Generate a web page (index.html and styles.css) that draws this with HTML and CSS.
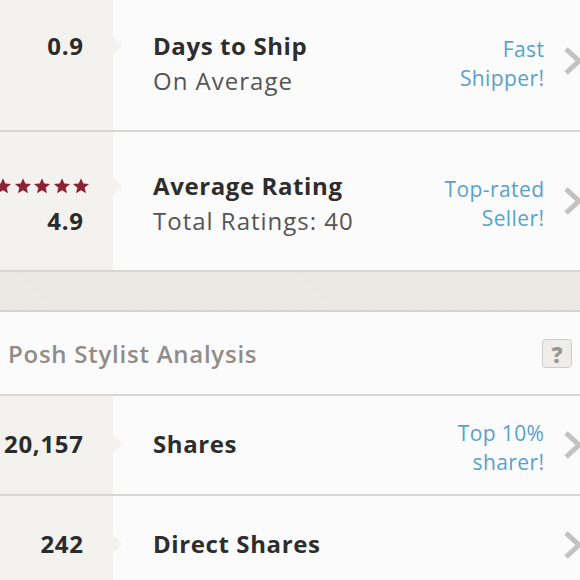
FILE: index.html
```html
<!DOCTYPE html>
<html>
<head>
<meta charset="utf-8">
<link rel="stylesheet" href="styles.css">
</head>
<body>
<div class="page">
  <div class="row tall">
    <div class="left"><div class="num">0.9</div></div>
    <div class="main">
      <div class="title">Days to Ship</div>
      <div class="sub">On Average</div>
    </div>
    <div class="badge">Fast<br>Shipper!</div>
    <div class="chev"><svg width="24" height="32" viewBox="0 0 24 32"><path d="M5 4 L18 16 L5 28" fill="none" stroke="#c3c2c0" stroke-width="5"/></svg></div>
  </div>
  <div class="row tall">
    <div class="left">
      <div class="stars">
        <svg width="18" height="18" viewBox="0 0 24 24"><path d="M12 1.5l3.1 7.1 7.6.6-5.8 5 1.8 7.5L12 17.8l-6.7 3.9 1.8-7.5-5.8-5 7.6-.6z" fill="#8c2335"/></svg>
        <svg width="18" height="18" viewBox="0 0 24 24"><path d="M12 1.5l3.1 7.1 7.6.6-5.8 5 1.8 7.5L12 17.8l-6.7 3.9 1.8-7.5-5.8-5 7.6-.6z" fill="#8c2335"/></svg>
        <svg width="18" height="18" viewBox="0 0 24 24"><path d="M12 1.5l3.1 7.1 7.6.6-5.8 5 1.8 7.5L12 17.8l-6.7 3.9 1.8-7.5-5.8-5 7.6-.6z" fill="#8c2335"/></svg>
        <svg width="18" height="18" viewBox="0 0 24 24"><path d="M12 1.5l3.1 7.1 7.6.6-5.8 5 1.8 7.5L12 17.8l-6.7 3.9 1.8-7.5-5.8-5 7.6-.6z" fill="#8c2335"/></svg>
        <svg width="18" height="18" viewBox="0 0 24 24"><path d="M12 1.5l3.1 7.1 7.6.6-5.8 5 1.8 7.5L12 17.8l-6.7 3.9 1.8-7.5-5.8-5 7.6-.6z" fill="#8c2335"/></svg>
      </div>
      <div class="num">4.9</div>
    </div>
    <div class="main">
      <div class="title">Average Rating</div>
      <div class="sub">Total Ratings: 40</div>
    </div>
    <div class="badge">Top-rated<br>Seller!</div>
    <div class="chev"><svg width="24" height="32" viewBox="0 0 24 32"><path d="M5 4 L18 16 L5 28" fill="none" stroke="#c3c2c0" stroke-width="5"/></svg></div>
  </div>
  <div class="band"></div>
  <div class="header">
    <div class="htitle">Posh Stylist Analysis</div>
    <div class="help">?</div>
  </div>
  <div class="row short">
    <div class="left"><div class="num">20,157</div></div>
    <div class="main">
      <div class="title">Shares</div>
    </div>
    <div class="badge">Top 10%<br>sharer!</div>
    <div class="chev"><svg width="24" height="32" viewBox="0 0 24 32"><path d="M5 4 L18 16 L5 28" fill="none" stroke="#c3c2c0" stroke-width="5"/></svg></div>
  </div>
  <div class="row short">
    <div class="left"><div class="num">242</div></div>
    <div class="main">
      <div class="title">Direct Shares</div>
    </div>
    <div class="badge"></div>
    <div class="chev"><svg width="24" height="32" viewBox="0 0 24 32"><path d="M5 4 L18 16 L5 28" fill="none" stroke="#c3c2c0" stroke-width="5"/></svg></div>
  </div>
</div>
</body>
</html>
```

FILE: styles.css
```css
html, body {
  margin: 0;
  padding: 0;
  background: #fcfbfb;
  overflow: hidden;
}
body {
  width: 580px;
  height: 580px;
  font-family: "Open Sans", Lato, "Liberation Sans", sans-serif;
}
.page {
  margin-top: -8px;
  width: 580px;
}
.row {
  display: flex;
  border-bottom: 2px solid #d8d6d3;
  background: #fcfbfb;
}
.row.tall { height: 138px; }
.row.short { height: 98px; }
.left {
  width: 113px;
  flex: none;
  background: #f4f2ef;
  position: relative;
  box-sizing: border-box;
  padding-right: 30px;
  display: flex;
  flex-direction: column;
  align-items: flex-end;
}
.left::after {
  content: "";
  position: absolute;
  right: -9px;
  width: 0;
  height: 0;
  border-top: 9px solid transparent;
  border-bottom: 9px solid transparent;
  border-left: 9px solid #f4f2ef;
}
.tall .left { padding-top: 36px; }
.tall .left::after { top: 45px; }
.short .left { padding-top: 30px; }
.short .left::after { top: 39px; }
.num {
  font-size: 24px;
  font-weight: 700;
  color: #2b2b2b;
  line-height: 35px;
  letter-spacing: 0.7px;
  margin-right: -0.7px;
}
.stars {
  display: flex;
  gap: 1.5px;
  height: 35px;
  align-items: center;
  margin-right: -7px;
}
.stars svg { display: block; }
.main {
  flex: 1;
  padding-left: 40px;
}
.tall .main { padding-top: 36px; }
.short .main { padding-top: 30px; }
.title {
  font-size: 24px;
  font-weight: 700;
  color: #2d2d2d;
  line-height: 35px;
  letter-spacing: 0.6px;
}
.sub {
  font-size: 24px;
  color: #555555;
  line-height: 35px;
  letter-spacing: 1px;
}
.badge {
  align-self: center;
  margin-top: 6px;
  text-align: right;
  font-size: 21px;
  line-height: 29px;
  color: #56a2cb;
  letter-spacing: 0.4px;
  margin-right: -0.4px;
}
.chev {
  width: 36px;
  flex: none;
  align-self: center;
  display: flex;
  padding-left: 17px;
  box-sizing: border-box;
}
.chev svg { display: block; flex: none; }
.band {
  height: 38px;
  background: #ebe8e4;
  background-image: repeating-linear-gradient(45deg, rgba(255,255,255,0.1) 0 1px, transparent 1px 3px);
  border-bottom: 2px solid #d6d3cf;
}
.header {
  height: 82px;
  display: flex;
  align-items: center;
  justify-content: space-between;
  padding: 0 8px;
  border-bottom: 2px solid #d8d6d3;
  background: #fcfbfb;
}
.htitle {
  font-size: 24px;
  font-weight: 600;
  color: #8f8c89;
  letter-spacing: 0.75px;
}
.help {
  width: 28px;
  height: 27px;
  border: 1px solid #cfccc9;
  border-radius: 4px;
  background: #efedeb;
  color: #9a9794;
  font-size: 22px;
  font-weight: 800;
  text-align: center;
  line-height: 28px;
}
```
